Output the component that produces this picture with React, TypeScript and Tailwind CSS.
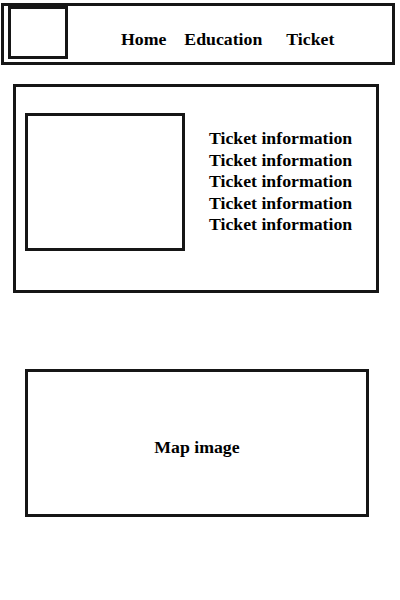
import React from "react";

export default function App() {
  const serif = { fontFamily: '"Liberation Serif", "Times New Roman", serif' };
  return (
    <div className="w-[400px] h-[600px] bg-white text-black font-bold flex flex-col" style={serif}>
      <nav className="ml-[1px] mt-[3px] w-[394px] h-[62px] border-[3px] border-[#161616] flex items-start">
        <div className="ml-[4px] mt-0 w-[60px] h-[53px] border-[3px] border-[#161616]" />
        <div className="ml-[53px] mt-[24px] flex text-[17.75px] leading-[18px]">
          <span>Home</span>
          <span className="ml-[18px]">Education</span>
          <span className="ml-[24px]">Ticket</span>
        </div>
      </nav>

      <section className="ml-[13px] mt-[19px] w-[366px] h-[209px] border-[3px] border-[#161616] flex items-start">
        <div className="ml-[9px] mt-[26px] w-[160px] h-[138px] border-[3px] border-[#161616]" />
        <div className="ml-[24px] mt-[41px] flex flex-col text-[17.75px] leading-[21.5px]">
          <span>Ticket information</span>
          <span>Ticket information</span>
          <span>Ticket information</span>
          <span>Ticket information</span>
          <span>Ticket information</span>
        </div>
      </section>

      <section className="ml-[25px] mt-[76px] w-[344px] h-[148px] border-[3px] border-[#161616] flex justify-center items-start">
        <span className="mt-[66px] text-[17.75px] leading-[18px]">Map image</span>
      </section>
    </div>
  );
}
